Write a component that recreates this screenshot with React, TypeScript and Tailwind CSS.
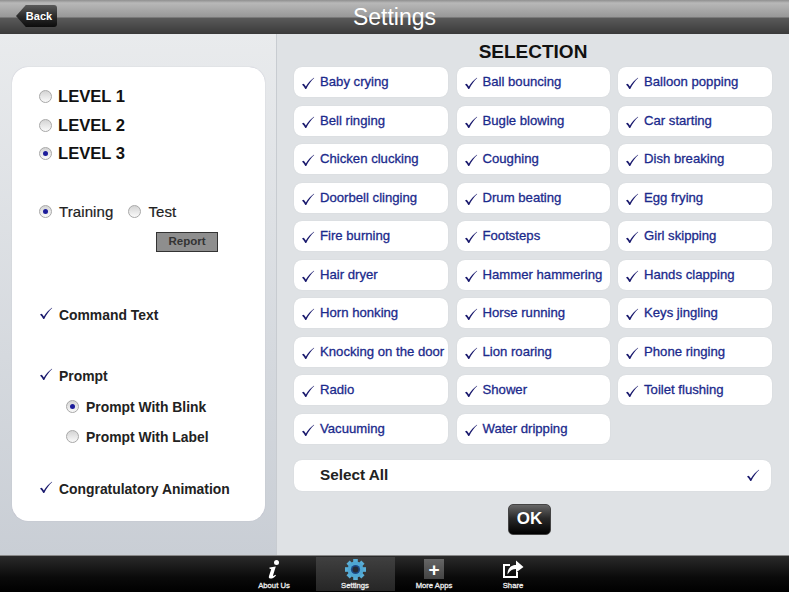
import React from 'react'

const sounds = [
  'Baby crying', 'Ball bouncing', 'Balloon popping',
  'Bell ringing', 'Bugle blowing', 'Car starting',
  'Chicken clucking', 'Coughing', 'Dish breaking',
  'Doorbell clinging', 'Drum beating', 'Egg frying',
  'Fire burning', 'Footsteps', 'Girl skipping',
  'Hair dryer', 'Hammer hammering', 'Hands clapping',
  'Horn honking', 'Horse running', 'Keys jingling',
  'Knocking on the door', 'Lion roaring', 'Phone ringing',
  'Radio', 'Shower', 'Toilet flushing',
  'Vacuuming', 'Water dripping',
]

function Tick({ className = '' }: { className?: string }) {
  return (
    <svg width="14" height="13" viewBox="0 0 15 14" className={`shrink-0 ${className}`}>
      <path d="M1 8 L3 7.2 L5.2 10.2 C7.5 6.5 10 3.4 13.8 0.8 L14.2 1.2 C10.8 4.4 8 8.2 5.6 13 L4.6 13 C3.6 11 2.4 9.4 1 8 Z" fill="#1a1a6e" />
    </svg>
  )
}

function Radio({ on = false }: { on?: boolean }) {
  return (
    <span className="flex h-[13px] w-[13px] shrink-0 items-center justify-center rounded-full border border-[#a8a8a8] bg-gradient-to-b from-[#d4d4d4] to-[#fafafa]">
      {on && <span className="h-[5px] w-[5px] rounded-full bg-[#1c1c9a]" />}
    </span>
  )
}

function SoundCell({ label }: { label: string }) {
  return (
    <div className="flex h-[30px] items-center gap-[5px] rounded-lg bg-white pl-[7px] shadow-[0_0_1px_#c4c8cc]">
      <Tick className="mt-[3px]" />
      <span className="whitespace-nowrap text-[13.15px] text-[#1b2a8c] [-webkit-text-stroke:0.3px_#1b2a8c]">{label}</span>
    </div>
  )
}

function Gear() {
  const teeth = [0, 45, 90, 135, 180, 225, 270, 315]
  return (
    <svg width="21" height="21" viewBox="0 0 20 20">
      {teeth.map((a) => (
        <rect key={a} x="7.8" y="0" width="4.4" height="5" fill="#5aaed6" transform={`rotate(${a} 10 10)`} />
      ))}
      <circle cx="10" cy="10" r="7.6" fill="#4fa6d2" />
      <circle cx="10" cy="10" r="4.4" fill="#1d4a86" />
      <circle cx="10" cy="10" r="2.8" fill="#262a33" />
    </svg>
  )
}

function InfoIcon() {
  return (
    <svg width="14" height="19" viewBox="0 0 14 19">
      <circle cx="9.5" cy="2.6" r="2.5" fill="#fff" />
      <path d="M2.5 7.6 L8.8 6.6 L6 15.4 C5.8 16.2 6.6 16.2 8.4 14.8 L9 15.4 C6.8 17.8 4.8 18.8 3.2 18.6 C1.8 18.4 1.6 17.2 2 16 L4.2 9.2 L2.4 8.6 Z" fill="#fff" />
    </svg>
  )
}

function TabItem({ label, active = false, className = '', children }: { label: string; active?: boolean; className?: string; children: React.ReactNode }) {
  return (
    <div className={`flex h-[34px] w-[79px] flex-col items-center justify-between ${active ? 'bg-gradient-to-b from-[#404040] to-[#262626]' : ''} ${className}`}>
      <div className="flex h-[24px] items-center justify-center">{children}</div>
      <span className="mb-[1px] text-[7.7px] leading-[9px] text-[#eee] [-webkit-text-stroke:0.3px_#eee]">{label}</span>
    </div>
  )
}

export default function App() {
  return (
    <div className="flex h-[592px] w-[789px] flex-col overflow-hidden bg-[#dfe2e5] font-['Liberation_Sans',Arial,sans-serif]">
      {/* top bar */}
      <div className="relative flex h-[34px] shrink-0 items-center justify-center border-b border-[#3a3a3a] bg-[linear-gradient(#8f8f8f_0,#b8b8b8_3px,#989898_17px,#5a5a5a_18px,#3c3c3c_33px)]">
        <span className="mt-[2px] text-[23px] leading-none text-white">Settings</span>
        <div className="absolute left-[16px] top-[5px] flex h-[22px] w-[41px] items-center justify-center rounded-r-[3px] bg-[linear-gradient(#5a5a5a,#2c2c2c_50%,#0c0c0c)] pl-[5px] text-[11px] font-bold text-white [clip-path:polygon(0_50%,24%_0,100%_0,100%_100%,24%_100%)]">
          Back
        </div>
      </div>

      <div className="flex min-h-0 flex-1">
        {/* left side */}
        <div className="w-[277px] shrink-0 border-r border-[#c8ccd1] bg-gradient-to-b from-[#e9ebed] to-[#c9ced5] pl-[12px] pt-[33px]">
          <div className="h-[454px] w-[253px] rounded-2xl bg-white pl-[27px] pt-[20px] shadow-[0_0_1px_#aab]">
            <div className="flex flex-col gap-[9px] text-[16.6px] font-bold leading-[19.5px] text-[#111]">
              <div className="flex items-center gap-[6px]"><Radio /><span>LEVEL 1</span></div>
              <div className="flex items-center gap-[6px]"><Radio /><span>LEVEL 2</span></div>
              <div className="flex items-center gap-[6px]"><Radio on /><span>LEVEL 3</span></div>
            </div>

            <div className="mt-[39px] flex items-center gap-[7px] text-[15px] leading-[18px] tracking-[0.1px] text-[#222] [-webkit-text-stroke:0.2px_#222]">
              <Radio on /><span>Training</span>
              <span className="ml-[8px]"><Radio /></span><span>Test</span>
            </div>
            <div className="ml-[117px] mt-[11px] flex h-[20px] w-[62px] items-center justify-center border border-[#333] bg-[#8e8e8e] text-[11.5px] font-bold text-[#333]">
              Report
            </div>

            <div className="mt-[55px] flex items-center gap-[6px] text-[13.9px] font-bold leading-[16px] text-[#222]">
              <Tick className="mb-[3px]" /><span>Command Text</span>
            </div>

            <div className="mt-[45px] flex items-center gap-[6px] text-[13.9px] font-bold leading-[16px] text-[#222]">
              <Tick className="mb-[3px]" /><span>Prompt</span>
            </div>
            <div className="ml-[27px] mt-[15px] flex items-center gap-[7px] text-[13.9px] font-bold leading-[16px] text-[#222]">
              <Radio on /><span>Prompt With Blink</span>
            </div>
            <div className="ml-[27px] mt-[14px] flex items-center gap-[7px] text-[13.9px] font-bold leading-[16px] text-[#222]">
              <Radio /><span>Prompt With Label</span>
            </div>

            <div className="mt-[36px] flex items-center gap-[6px] text-[13.9px] font-bold leading-[16px] text-[#222]">
              <Tick className="mb-[3px]" /><span>Congratulatory Animation</span>
            </div>
          </div>
        </div>

        {/* right side */}
        <div className="flex-1 pl-[17px] pr-[17px]">
          <div className="mt-[7px] h-[26.2px] text-center text-[19px] font-bold leading-[22px] text-[#111]">SELECTION</div>
          <div className="grid grid-cols-[154px_153px_154px] gap-x-[8.5px] gap-y-[8.5px]">
            {sounds.map((s) => (
              <SoundCell key={s} label={s} />
            ))}
          </div>
          <div className="mt-[16px] flex h-[31px] w-[477px] items-center justify-between rounded-lg bg-white pl-[26px] pr-[11px] shadow-[0_0_1px_#c4c8cc]">
            <span className="text-[15.3px] font-bold text-[#222]">Select All</span>
            <Tick />
          </div>
          <div className="mt-[13px] flex justify-center pr-[7px]">
            <div className="flex h-[31px] w-[43px] items-center justify-center rounded-[5px] border border-[#444] bg-[linear-gradient(#666,#2a2a2a_45%,#000)] text-[17px] font-bold text-white">
              OK
            </div>
          </div>
        </div>
      </div>

      {/* tab bar */}
      <div className="flex h-[37px] shrink-0 justify-center border-t border-[#888] bg-[linear-gradient(#2a2a2a,#0a0a0a_60%,#000)] pt-[1px]">
        <TabItem label="About Us" className="pr-[4px]">
          <InfoIcon />
        </TabItem>
        <TabItem label="Settings" active>
          <Gear />
        </TabItem>
        <TabItem label="More Apps">
          <div className="flex h-[20px] w-[20px] items-center justify-center bg-gradient-to-b from-[#666] to-[#444] text-[19px] font-bold leading-none text-white">+</div>
        </TabItem>
        <TabItem label="Share">
          <svg width="22" height="20" viewBox="0 0 22 20">
            <path d="M1 5 H8 V7 H3 V17 H14 V13 H16 V19 H1 Z" fill="#fff" />
            <path d="M5.5 15.5 C5.5 8.5 10 6 14 6 V1.5 L21.5 8 L14 13.5 V10 C10.5 10 8 11.5 5.5 15.5 Z" fill="#fff" />
          </svg>
        </TabItem>
      </div>
    </div>
  )
}
